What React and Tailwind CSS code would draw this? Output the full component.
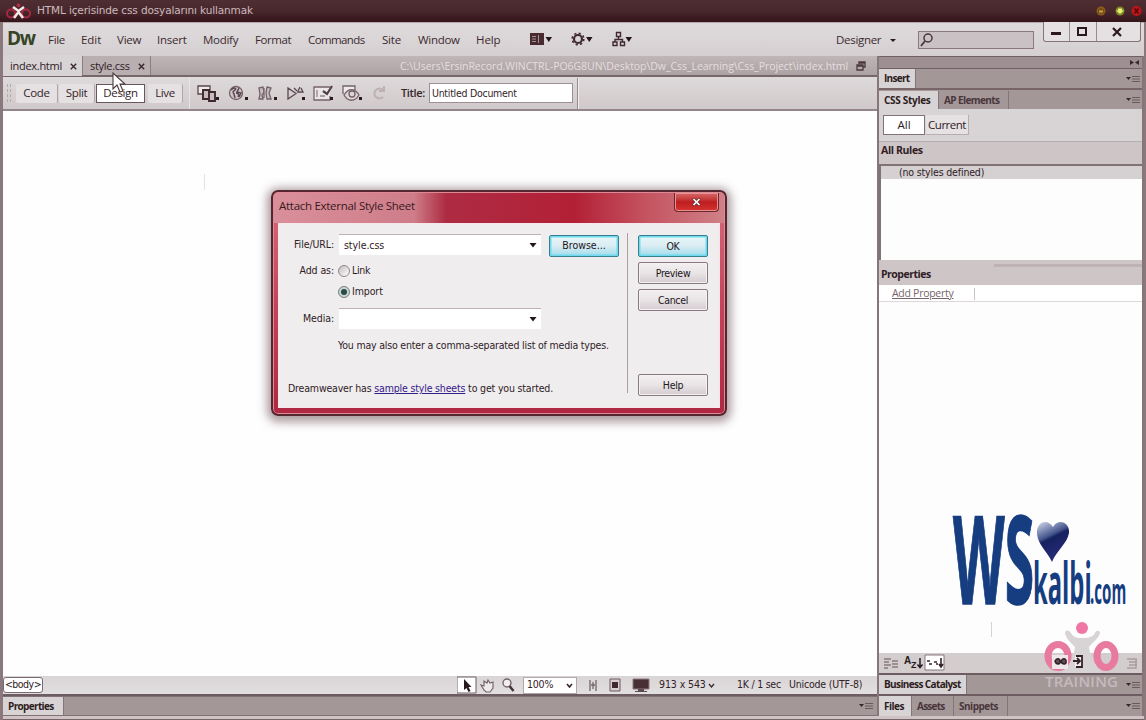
import clsx from "clsx";

const menus = [
  { name: "File", cls: "w-[33px] tracking-[-0.3px]" },
  { name: "Edit", cls: "w-9 tracking-[-0.05px]" },
  { name: "View", cls: "w-10 tracking-[-0.2px]" },
  { name: "Insert", cls: "w-[46px] tracking-[-0.25px]" },
  { name: "Modify", cls: "w-[52px] tracking-[-0.27px]" },
  { name: "Format", cls: "w-[53px] tracking-[-0.4px]" },
  { name: "Commands", cls: "w-[74px] tracking-[-0.6px]" },
  { name: "Site", cls: "w-9 tracking-[-0.2px]" },
  { name: "Window", cls: "w-[58px] tracking-[-0.3px]" },
  { name: "Help", cls: "w-[54px] tracking-[-0.1px]" },
];

function PanelMenu({ className }) {
  return (
    <svg className={clsx("shrink-0", className)} width="14" height="8" viewBox="0 0 14 8">
      <path d="M0 2h5L2.5 5z" fill="#3a262a" />
      <path d="M6 1.5h8M6 4h8M6 6.5h8" stroke="#6b595c" />
    </svg>
  );
}

function Tab({ active, className, children }) {
  return (
    <div
      className={clsx(
        "flex h-full items-center whitespace-nowrap border-r border-[#857578] pl-[5px] text-[10px] font-bold",
        active ? "bg-[#d8d3d4] text-[#2d1d21]" : "bg-[#a49798] text-[#49363b]",
        className
      )}
    >
      {children}
    </div>
  );
}

function DialogButton({ primary, className, children }) {
  return (
    <button
      className={clsx(
        "flex h-[22px] w-[70px] shrink-0 items-center justify-center rounded-[2px] border font-[DejaVu_Sans_Condensed] text-[10.5px] leading-none tracking-[-0.3px] text-[#22151a]",
        primary
          ? "border-[#37808e] bg-linear-to-b from-[#e8f8fa] via-[#d9ecf2] to-[#9edcec] shadow-[inset_0_0_0_1.5px_#6fd9ef]"
          : "border-[#87797e] bg-linear-to-b from-[#f3eff0] via-[#e9e4e6] to-[#d3cbd0] shadow-[inset_0_0_0_1px_#f6f2f4]",
        className
      )}
    >
      {children}
    </button>
  );
}

function TitleBar() {
  return (
    <div className="flex h-[22px] shrink-0 items-center bg-linear-to-b from-[#4e2d33] via-[#48272d] to-[#34151a]">
      <svg className="ml-[6px]" width="25" height="18" viewBox="0 0 25 18">
        <circle cx="5" cy="11.5" r="4" fill="none" stroke="#a92840" strokeWidth="2" />
        <circle cx="20" cy="11.5" r="4" fill="none" stroke="#a92840" strokeWidth="2" />
        <circle cx="12.5" cy="3.2" r="1.8" fill="#c32e45" />
        <path d="M7 5l5.500 4L18 5M12.500 8v3M8 16l4.500-6 4.500 6" fill="none" stroke="#f4e8e9" strokeWidth="2.500" />
      </svg>
      <span className="ml-[6px] w-[217px] whitespace-nowrap font-[DejaVu_Sans] text-[10.5px] tracking-[-0.13px] text-[#cbbabc]">
        HTML içerisinde css dosyalarını kullanmak
      </span>
      <svg className="-mt-px ml-auto mr-[3px]" width="50" height="14" viewBox="0 0 50 14">
        <circle cx="8" cy="7" r="4.500" fill="#8a5d18" />
        <path d="M5.500 6h5v3h-5zM6.500 5h3" fill="#c49b45" stroke="#5b380e" strokeWidth=".7" />
        <circle cx="27" cy="7" r="4.500" fill="#7c861e" />
        <path d="M25 4.500h4v2h2L27 10l-4-3.500h2z" fill="#e8ec79" />
        <circle cx="43.500" cy="7" r="5" fill="#bf1518" />
        <path d="M41.500 4.500l4 5M45.500 4.500l-4 5" stroke="#4e080b" strokeWidth="1.500" />
      </svg>
    </div>
  );
}

function MenuBar() {
  return (
    <div className="relative flex h-[34px] shrink-0 items-center border-t border-[#b5a7aa] bg-linear-to-b from-[#dfdbdc] to-[#d5cfd1] text-[11.5px] font-medium text-[#3c2a30]">
      <span className="-mt-[3px] ml-1 w-[41px] font-[Open_Sans] text-[19px] font-bold leading-none tracking-[-1.3px] text-[#354326]">
        Dw
      </span>
      {menus.map((m) => (
        <span key={m.name} className={clsx("shrink-0 whitespace-nowrap", m.cls)}>
          {m.name}
        </span>
      ))}
      <svg className="-mt-[2px] w-[104px] shrink-0" height="16" viewBox="0 0 104 16">
        <path d="M0 2h14v12H0z" fill="#482a30" />
        <path d="M2 5.500h4M2 8h4M2 10.500h4M8.500 4v8" stroke="#a39496" />
        <path d="M15.500 6h6.500l-3.200 5zM56 6h6.500l-3.200 5zM95.500 6h6.500l-3.200 5z" fill="#24161a" />
        <circle cx="48" cy="8" r="4" fill="none" stroke="#402a30" strokeWidth="2.200" />
        <circle cx="48" cy="8" r="5.800" fill="none" stroke="#402a30" strokeWidth="1.600" strokeDasharray="2.200 2.350" />
        <path d="M86.500 1.500h4v4h-4zM83 11h4v3.500h-4zM90.500 11h4v3.500h-4zM88.500 6v2.500M85 11V8.500h7.500V11" fill="none" stroke="#402a30" strokeWidth="1.400" />
      </svg>
      <span className="ml-auto w-[54px] tracking-[-0.3px]">Designer</span>
      <svg className="mt-[2px]" width="7" height="5" viewBox="0 0 7 5">
        <path d="M0 1h6L3 4z" fill="#2a1a1e" />
      </svg>
      <div className="ml-[21px] mr-[110px] mt-px h-[18px] w-[116px] border border-[#89797d] bg-[#c9c1c3]">
        <svg width="18" height="16" viewBox="0 0 18 16">
          <circle cx="9" cy="6" r="4" fill="none" stroke="#49363b" strokeWidth="1.500" />
          <path d="M6 9l-4 5" stroke="#49363b" strokeWidth="1.800" />
        </svg>
      </div>
      <div className="absolute right-[3px] top-[-1px] flex h-[20px] w-[98px] rounded-b-[3px] border border-t-0 border-[#82747a] bg-[#e5e1e2]">
        <div className="w-[26px] border-r border-[#988b8f] pl-[7px] pt-[10px]">
          <div className="h-[3px] w-[10px] bg-[#2b191e]" />
        </div>
        <div className="w-[27px] border-r border-[#988b8f] pl-[7px] pt-[5px]">
          <div className="h-[9px] w-[10px] border-2 border-[#2b191e]" />
        </div>
        <svg className="ml-[15px] mt-[5px]" width="10" height="10" viewBox="0 0 10 10">
          <path d="M1 1l8 8M9 1L1 9" stroke="#2b191e" strokeWidth="2.200" />
        </svg>
      </div>
    </div>
  );
}

function Close() {
  return (
    <svg width="7" height="7" viewBox="0 0 7 7">
      <path d="M.8.8l5.400 5.400M6.200.8L.8 6.200" stroke="#35242a" strokeWidth="1.300" />
    </svg>
  );
}

function DocumentTabs() {
  return (
    <div className="flex h-[21px] shrink-0 items-center border-b-2 border-[#77676b] bg-linear-to-b from-[#c0b6b8] to-[#aca1a3] font-[Open_Sans] text-[11px] font-medium text-[#302025]">
      <div className="flex h-[21px] w-[79px] items-center bg-[#d8d3d4] pl-[7px] pt-[2px]">
        <span className="w-[60px] tracking-[-0.28px]">index.html</span>
        <Close />
      </div>
      <div className="flex h-full w-[69px] items-center border-x border-[#8e7e82] bg-[#b9afb1] pl-[7px] pt-[2px]">
        <span className="w-[48px] tracking-[-0.3px]">style.css</span>
        <Close />
      </div>
      <span className="ml-auto mt-[2px] w-[449px] whitespace-nowrap text-[10.5px] tracking-[-0.05px] text-[#e5dedf]">
        C:\Users\ErsinRecord.WINCTRL-PO6G8UN\Desktop\Dw_Css_Learning\Css_Project\index.html
      </span>
      <svg className="ml-[7px] mr-[11px] mt-px" width="10" height="10" viewBox="0 0 10 10">
        <path d="M3 3V1h6v5H7M1 4h6v5H1zM1 5h6M3 2h6" fill="none" stroke="#4b383d" strokeWidth="1.300" />
      </svg>
    </div>
  );
}

function ToolbarIcons() {
  return (
    <svg className="shrink-0" width="194" height="24" viewBox="196 81 194 24" fill="none" stroke="#75636a" strokeWidth="1.300">
      <path d="M198 86h12v8h-12z" fill="#eee9ea" stroke="#5b474e" />
      <path d="M203 90h6v9h-6zM209 92h6v9h-6z" fill="#c7bbbd" stroke="#3d2930" strokeWidth="1.900" />
      <circle cx="236" cy="93" r="6.500" fill="#d0c5c8" />
      <path d="M231 90c3-3 6-2 4 0s-3 1-1 4l1 4M239 88l-2 4 4 1-2 4M236 93c3 0 3 2 2 4" stroke="#594850" strokeWidth="1.500" />
      <path d="M259 88l4-1 1 5-2 3 1 4h-4l1-5zM267 87l4 1-2 5 2 6h-4l-1-6zM264 88v10" fill="#c9bec1" />
      <path d="M288 88v11l8-5.500zM294 88l3 3M298 91l2-4M297 92h6l-2-4" fill="#d9d0d3" stroke="#5a484f" />
      <path d="M330 87h-16v13h16v-4" fill="#ebe6e7" />
      <path d="M317 90v7M320 96h5" stroke="#95858a" />
      <path d="M323 91l4 3 5-8" stroke="#51404a" strokeWidth="2.200" />
      <path d="M343 94v-8h12v4" fill="#eee9ea" />
      <path d="M344 95c4-7 11-7 15 0-4 7-11 7-15 0z" fill="#ddd5d7" />
      <circle cx="352" cy="94" r="3" />
      <path d="M383 90a5 5 0 1 0 0 7M379 91h5v-5" stroke="#bdb1b4" strokeWidth="2" />
      <path d="M216 97h3v3h-3zM245 97h3v3h-3zM274 97h3v3h-3zM302 97h3v3h-3zM330 97h3v3h-3zM359 97h3v3h-3z" fill="#2d1a21" stroke="none" />
    </svg>
  );
}

function Toolbar() {
  const button = "flex h-[19px] items-center justify-center rounded-[2px] border-r border-[#b0a4a7] bg-[#e5e0e1]";
  return (
    <div className="flex h-[34px] shrink-0 items-center border-b-2 border-[#94858a] bg-linear-to-b from-[#ded9da] to-[#d0c9cb] text-[11.5px] tracking-[-0.35px] text-[#35242a]">
      <div className="ml-1 h-[18px] w-[4px] border-x border-dashed border-[#b4a9ac]" />
      <div className={clsx(button, "ml-[5px] w-[42px]")}>Code</div>
      <div className={clsx(button, "ml-px w-[36px]")}>Split</div>
      <div className="ml-px flex h-[19px] w-[49px] items-center justify-center border border-[#67575c] bg-white">Design</div>
      <div className={clsx(button, "ml-[3px] w-[35px]")}>Live</div>
      <div className="ml-[6px] h-full w-px bg-[#e8e4e5]" />
      <div className="ml-[6px]"><ToolbarIcons /></div>
      <span className="ml-[11px] w-[28px] font-[Open_Sans] text-[11px] font-semibold">Title:</span>
      <div className="h-[20px] w-[144px] border border-[#9d9094] bg-white pl-[2px] font-[DejaVu_Sans_Condensed] text-[10.5px] leading-[18px] tracking-[-0.27px]">
        Untitled Document
      </div>
      <div className="ml-1 h-[31px] w-[2px] border-l border-[#998b8f] bg-[#f1edef]" />
    </div>
  );
}

function StatusBar() {
  return (
    <div className="flex h-[20px] shrink-0 items-center border-b-2 border-[#6d5c61] bg-linear-to-b from-[#d9d5d6] to-[#e2dfe0] font-[DejaVu_Sans_Condensed] text-[10.5px] text-[#302126]">
      <div className="flex h-[16px] w-[40px] items-center justify-center rounded-[3px] border border-[#786a6e] bg-white tracking-[-0.5px]">
        &lt;body&gt;
      </div>
      <svg className="ml-[414px] shrink-0" width="65" height="18" viewBox="457 676 65 18">
        <path d="M457 677h19v16h-19z" fill="#fff" stroke="#6d5d62" />
        <path d="M464 679v11l2.500-2 2 4 2-1-2-4h3z" fill="#27181d" />
        <path d="M484 690l-3-5 3 1v-5l3 2 1-3 2 3 3-1v6l-3 4h-4z" fill="#eee9eb" stroke="#75656a" strokeWidth="1.200" />
        <circle cx="507" cy="683" r="4" fill="#f2edef" stroke="#75656a" strokeWidth="1.400" />
        <path d="M509.500 686l4 5" stroke="#463239" strokeWidth="2.500" />
      </svg>
      <div className="ml-[1px] flex h-[17px] w-[54px] shrink-0 items-center border border-[#b2a7ab] bg-white pl-[3px]">
        <span className="w-[39px] tracking-[-0.2px]">100%</span>
        <svg width="7" height="5" viewBox="0 0 7 5"><path d="M1 1l2.500 3L6 1" fill="none" stroke="#38272c" strokeWidth="1.600" /></svg>
      </div>
      <svg className="ml-[11px] shrink-0" width="64" height="16" viewBox="0 0 64 16">
        <path d="M2 3v11M8 3v11M5 5v7M3 8h4" stroke="#75656a" strokeWidth="1.300" />
        <path d="M22 2h10v12H22z" fill="#d9cfd2" stroke="#695960" />
        <path d="M24 5h6v6h-6z" fill="#3e292f" />
        <path d="M45 2h16v10H45z" fill="#482e35" stroke="#887a7e" />
        <path d="M50 12h6v2h3v1H47v-1h3z" fill="#5d494f" />
      </svg>
      <span className="ml-[7px] w-[49px] whitespace-nowrap tracking-[-0.1px]">913 x 543</span>
      <svg width="7" height="5" viewBox="0 0 7 5"><path d="M1 1l2.500 3L6 1" fill="none" stroke="#38272c" strokeWidth="1.300" /></svg>
      <span className="ml-auto w-[52px] whitespace-nowrap tracking-[-0.25px]">1K / 1 sec</span>
      <span className="mr-[12px] w-[76px] whitespace-nowrap tracking-[-0.2px]">Unicode (UTF-8)</span>
    </div>
  );
}

function StylesPanel() {
  return (
    <aside className="flex w-[267px] shrink-0 flex-col border-x-2 border-[#85767a] bg-[#d5cfd1]">
      <div className="flex h-[13px] shrink-0 items-center justify-end border-y border-[#716065] bg-[#9d8f92] pr-[3px]">
        <svg width="9" height="5" viewBox="0 0 9 5"><path d="M0 0l4 2.500L0 5zM9 0L5 2.500 9 5z" fill="#3b292e" /></svg>
      </div>
      <div className="flex h-[21px] shrink-0 items-center border-b-2 border-[#776569] bg-[#a49798]">
        <Tab active className="w-[37px] tracking-[-0.7px]">Insert</Tab>
        <PanelMenu className="ml-auto mr-[2px]" />
      </div>
      <div className="flex h-[19px] shrink-0 items-center bg-[#a49798] pt-px">
        <Tab active className="w-[60px] tracking-[-0.3px]">CSS Styles</Tab>
        <Tab className="w-[70px] tracking-[-0.6px]">AP Elements</Tab>
        <PanelMenu className="ml-auto mr-[2px]" />
      </div>
      <div className="flex h-[32px] shrink-0 items-center bg-[#d8d4d5] pl-1 text-[11.5px] text-[#302025]">
        <div className="flex h-[20px] w-[42px] items-center justify-center border border-[#817277] bg-white">All</div>
        <div className="ml-[1px] flex h-[20px] w-[43px] items-center justify-center border-b border-r border-[#b7adaf] bg-[#e6e2e3] tracking-[-0.5px]">Current</div>
      </div>
      <div className="h-[23px] shrink-0 border-t border-[#b8acaf] bg-[#cec5c7] pl-[2px] text-[10.5px] font-bold leading-[17px] tracking-[-0.35px] text-[#302025]">
        All Rules
      </div>
      <div className="h-[96px] shrink-0 border-l-2 border-t-2 border-[#817277] bg-[#fefdfd]">
        <div className="h-[13px] bg-[#d5d0d1] pl-[18px] font-[DejaVu_Sans_Condensed] text-[10.5px] leading-[13px] tracking-[-0.16px] text-[#302025]">
          (no styles defined)
        </div>
      </div>
      <div className="h-[25px] shrink-0 bg-[#cec5c7] pt-1 text-[10.5px] font-bold text-[#302025]">
        <div className="ml-[115px] h-[3px] bg-[#bfb2b6]" />
        <div className="pl-[2px] tracking-[-0.5px]">Properties</div>
      </div>
      <div className="flex h-[17px] shrink-0 items-center border-b border-[#ddd7d9] bg-white pl-[13px] pt-[2px] text-[10.5px] text-[#75666b]">
        <span className="w-[82px] tracking-[-0.28px] underline">Add Property</span>
        <div className="h-[12px] w-px bg-[#ccc3c6]" />
      </div>
      <div className="relative min-h-0 flex-1 bg-[#fefdfd]">
        {/* Site watermark */}
        <svg className="absolute left-[71px] top-[207px] overflow-visible" width="184" height="102" viewBox="950 510 184 102">
          <defs>
            <linearGradient id="heart" x1="0" y1="0" x2=".4" y2="1">
              <stop offset="0" stopColor="#d7dcec" />
              <stop offset=".42" stopColor="#46578f" />
              <stop offset=".5" stopColor="#172260" />
              <stop offset="1" stopColor="#242b77" />
            </linearGradient>
          </defs>
          <g fill="#153d80" fontFamily="Open Sans" fontWeight="700">
            <text transform="translate(953 605) scale(.438 1)" fontSize="122" stroke="#153d80" strokeWidth="1.500">WS</text>
            <text transform="translate(1033 605) scale(.41 1)" fontSize="58">kalbi</text>
            <text transform="translate(1090 605) scale(.42 1)" fontSize="36">.com</text>
          </g>
          <path d="M1053 528c-6-9-17-5-16 7 1 11 10 17 15 28 4-11 15-18 17-29 1-11-11-15-16-6z" fill="url(#heart)" />
        </svg>
        <div className="absolute left-[112px] top-[320px] h-[15px] w-px bg-[#d9d2d4]" />
      </div>
      <div className="relative flex h-[22px] shrink-0 items-center border-b-2 border-[#6d5c61] bg-[#d3cdce]">
        <svg width="70" height="20" viewBox="0 0 70 20">
          <path d="M5 6h7M5 9h5M5 12h7M5 15h4M13 8h6M13 11h6M13 14h6" stroke="#8a7b80" strokeWidth="1.500" />
          <path d="M41 5v9M38.500 11.500l2.500 3 2.500-3" fill="none" stroke="#291a20" strokeWidth="1.500" />
          <text x="25" y="11" fontFamily="Liberation Sans" fontSize="10" fontWeight="700" fill="#291a20">A</text>
          <text x="32" y="15" fontFamily="Liberation Sans" fontSize="9" fontWeight="700" fill="#291a20">Z</text>
          <path d="M46 2h19v15H46z" fill="#fff" stroke="#86777c" />
          <path d="M48 8h3M50 11h3M55 9h3M57 11h2M62 5v8M60 11l2 3 2-3" stroke="#35242a" strokeWidth="1.600" />
        </svg>
        <svg className="ml-auto mr-1" width="12" height="12" viewBox="0 0 12 12"><path d="M1 2h10M3 5h8M3 8h8M10 2v9H1" fill="none" stroke="#aa9da1" strokeWidth="1.500" /></svg>
      </div>
      <div className="relative flex h-[21px] shrink-0 items-center border-b-2 border-[#6d5c61] bg-[#a49798]">
        <Tab active className="w-[88px] tracking-[-0.62px]">Business Catalyst</Tab>
        <PanelMenu className="ml-auto mr-[2px]" />
        <svg className="absolute left-[162px] top-[-57px]" width="82" height="72" viewBox="1041 618 82 72">
          <ellipse cx="1058" cy="656" rx="10" ry="11.500" fill="none" stroke="#e8799f" strokeWidth="7" />
          <ellipse cx="1106" cy="656" rx="9" ry="11.500" fill="none" stroke="#e8799f" strokeWidth="7" />
          <circle cx="1082" cy="628" r="6" fill="#ef76a5" />
          <path d="M1065 632c2-3 5-1 6 1 3 5 7 5 11 5s10 0 13-5c1-3 5-3 5 0-1 5-8 10-11 14 1 10 7 19 13 26h-40c7-6 12-17 13-26-4-4-10-9-10-15z" fill="#d8d4d6" />
          <path d="M1052 655h16v14h-16z" fill="#eee6e9" />
          <path d="M1055 661c2-4 5-2 5 0 1 4-4 4-5 0zM1061 661c2-4 5-2 5 0 1 4-4 4-5 0z" fill="#614d53" stroke="#302026" strokeWidth="1.500" />
          <path d="M1075 656h7v11h-7z" fill="#f1edef" />
          <path d="M1076 656h6v11h-6M1073 661h6M1077 658l3 3-3 3" fill="none" stroke="#342229" strokeWidth="1.800" />
          <text x="1045" y="687" textLength="73" fontFamily="Open Sans" fontWeight="600" fontSize="15" fill="#c6babd">TRAINING</text>
        </svg>
      </div>
      <div className="flex h-[20px] shrink-0 items-center bg-[#a49798]">
        <Tab active className="w-[33px] tracking-[-0.5px]">Files</Tab>
        <Tab className="w-[42px] tracking-[-0.75px]">Assets</Tab>
        <Tab className="w-[54px] tracking-[-0.5px]">Snippets</Tab>
        <PanelMenu className="ml-auto mr-[2px]" />
      </div>
    </aside>
  );
}

function ComboField({ value }) {
  return (
    <div className="flex h-[21px] w-[202px] items-center justify-between border-t border-[#bcb2b6] bg-white pl-[5px] pr-1">
      <span className="tracking-[-0.050px]">{value}</span>
      <svg width="8" height="5" viewBox="0 0 8 5"><path d="M.5 0h7L4 4.500z" fill="#24171b" /></svg>
    </div>
  );
}

function AttachDialog() {
  return (
    <div className="absolute left-[268px] top-[79px] flex h-[226px] w-[456px] flex-col rounded-[7px] border-2 border-[#542630] bg-linear-to-b from-[#d66d7b] via-[#c5435b] to-[#af2740] px-[5px] pb-[6px] shadow-[0_2px_10px_4px_rgba(105,75,82,0.55),inset_0_0_0_1px_#df8994]">
      <div className="-mx-[4px] mt-px flex h-[30px] shrink-0 items-start rounded-t-[4px] bg-[linear-gradient(90deg,#d98f9a_0px,#ce7d89_140px,#ad2c43_172px,#b32036_300px,#c4525f_370px,#cf8288_451px)] pl-[5px]">
        <span className="mt-[4px] font-[Open_Sans] text-[11.5px] tracking-[-0.28px] text-[#381920]">Attach External Style Sheet</span>
        <div className="ml-auto mr-[5px] flex h-[19px] w-[45px] items-center justify-center rounded-b-[4px] border border-t-0 border-[#71252c] bg-linear-to-b from-[#d9676a] via-[#bd1c20] to-[#d63430] shadow-[inset_0_0_0_1px_#e39191]">
          <svg width="9" height="8" viewBox="0 0 9 8"><path d="M1 .5l7 7M8 .5l-7 7" stroke="#663034" strokeWidth="3" /><path d="M1.500 1l6 6M7.500 1l-6 6" stroke="white" strokeWidth="1.700" /></svg>
        </div>
      </div>
      <div className="flex min-h-0 flex-1 border border-[#f7e7ea] bg-[#efedee] font-[DejaVu_Sans_Condensed] text-[10.5px] leading-[15px] text-[#302126]">
        <div className="flex w-[348px] shrink-0 flex-col pl-[9px] pt-[10px]">
          <div className="flex h-[21px] items-center">
            <span className="mr-[5px] w-[46px] whitespace-nowrap text-right tracking-[-0.1px]">File/URL:</span>
            <ComboField value="style.css" />
            <DialogButton primary className="ml-2 mt-[2px] tracking-[0px]">Browse...</DialogButton>
          </div>
          <div className="mt-[5px] flex h-[21px] items-center">
            <span className="mr-[4px] w-[46px] whitespace-nowrap text-right tracking-[-0.1px]">Add as:</span>
            <div className="size-3 rounded-full border border-[#93868a] bg-linear-to-br from-[#c4bdc0] to-white" />
            <span className="ml-[2px] tracking-[-0.3px]">Link</span>
          </div>
          <div className="ml-[50px] flex h-[21px] items-center">
            <div className="flex size-3 items-center justify-center rounded-full border border-[#7a7d7d] bg-[#c7d4d1]">
              <div className="size-[6px] rounded-full bg-[#284b47]" />
            </div>
            <span className="ml-[2px] tracking-[-0.1px]">Import</span>
          </div>
          <div className="mt-[6px] flex h-[21px] items-center">
            <span className="mr-[5px] w-[46px] text-right tracking-[-0.1px]">Media:</span>
            <ComboField />
          </div>
          <p className="ml-[50px] mt-[9px] whitespace-nowrap tracking-[-0.19px]">You may also enter a comma-separated list of media types.</p>
          <p className="mt-[28px] whitespace-nowrap tracking-[-0.17px]">
            Dreamweaver has <a className="text-[#35208b] underline">sample style sheets</a> to get you started.
          </p>
        </div>
        <div className="mb-[14px] mt-[9px] w-px bg-[#aaa0a4]" />
        <div className="ml-[10px] flex flex-col gap-[5px] pt-[11px]">
          <DialogButton primary>OK</DialogButton>
          <DialogButton>Preview</DialogButton>
          <DialogButton>Cancel</DialogButton>
          <DialogButton className="mt-[58px]">Help</DialogButton>
        </div>
      </div>
    </div>
  );
}

export default function App() {
  return (
    <div className="flex h-[720px] w-[1146px] flex-col overflow-hidden bg-[#d7d2d3] font-[Open_Sans,Noto_Sans,sans-serif] leading-normal">
      <TitleBar />
      <div className="flex min-h-0 flex-1 flex-col border-l-3 border-r-2 border-[#8a787d] bg-[#d7d2d3]">
        <MenuBar />
        <div className="flex min-h-0 flex-1">
          <main className="relative flex min-w-0 flex-1 flex-col">
            <DocumentTabs />
            <Toolbar />
            <div className="relative min-h-0 flex-1 bg-[#fefefe]">
              <div className="absolute left-[201px] top-[63px] h-[16px] w-px bg-[#e5e1e2]" />
              <AttachDialog />
            </div>
            <StatusBar />
            <div className="flex h-[20px] shrink-0 items-center border-y border-[#827276] bg-[#a49798]">
              <Tab active className="w-[61px] pl-2 tracking-[-0.65px]">Properties</Tab>
              <PanelMenu className="ml-auto mr-1" />
            </div>
            {/* Pointer resting on the second tab */}
            <svg className="absolute left-[109px] top-[16px]" width="14" height="22" viewBox="0 0 14 22">
              <path d="M1 1v16l4-4 3 7 3-1-3-7h5z" fill="#fff" stroke="#4b393e" strokeWidth="1.100" />
            </svg>
          </main>
          <StylesPanel />
        </div>
        <div className="h-1 shrink-0 border-b border-[#756569] bg-[#cfc3c6]" />
      </div>
    </div>
  );
}
